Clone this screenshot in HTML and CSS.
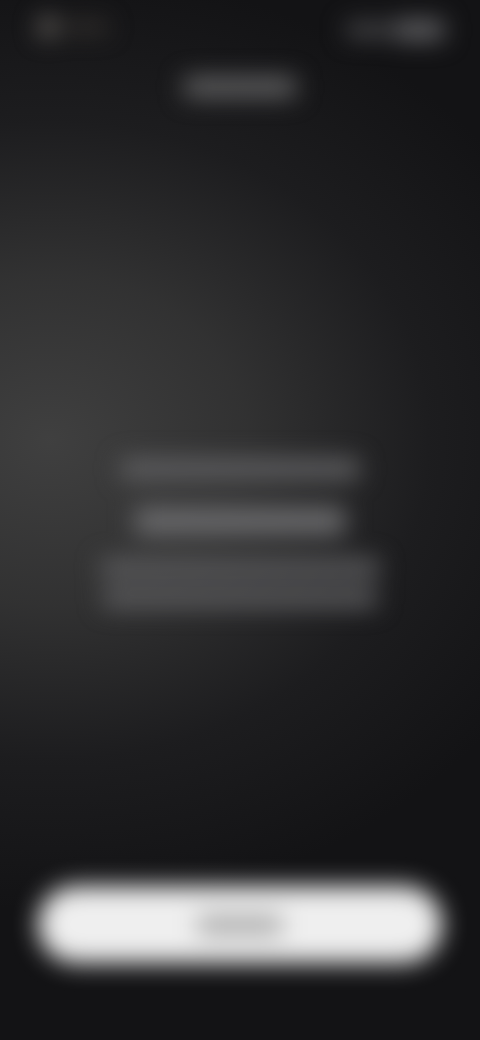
FILE: index.html
```html
<!DOCTYPE html>
<html lang="en">
<head>
<meta charset="utf-8">
<title>Blurred screen</title>
<link rel="stylesheet" href="styles.css">
</head>
<body>
<main class="screen">
  <div class="content">
    <header class="status">
      <div class="status-left">
        <span class="dot"></span>
        <span class="bar status-label"></span>
      </div>
      <div class="status-right">
        <span class="bar status-a"></span>
        <span class="bar status-b"></span>
      </div>
    </header>
    <div class="bar title"></div>
    <section class="message">
      <div class="bar line-1"></div>
      <div class="bar line-2"></div>
      <div class="bar line-3"></div>
      <div class="bar line-4"></div>
    </section>
    <div class="button"><span class="bar button-label"></span></div>
  </div>
</main>
</body>
</html>
```
FILE: styles.css
```css
html, body {
  margin: 0;
  padding: 0;
  width: 480px;
  height: 1040px;
  overflow: hidden;
  background: #131315;
}
.screen {
  width: 480px;
  height: 1040px;
  overflow: hidden;
  background:
    radial-gradient(ellipse 560px 470px at 50px 440px, rgba(66,66,66,0.95) 0%, rgba(58,58,58,0.78) 35%, rgba(42,42,44,0.42) 68%, rgba(20,20,22,0) 100%),
    #131315;
}
.content {
  height: 1040px;
  box-sizing: border-box;
  display: flex;
  flex-direction: column;
  align-items: center;
  padding: 15px 38px 77px;
  filter: blur(12px);
}
.bar {
  display: block;
  border-radius: 3px;
}
.status {
  align-self: stretch;
  display: flex;
  justify-content: space-between;
  align-items: center;
  height: 24px;
}
.status-left {
  display: flex;
  align-items: center;
  gap: 8px;
}
.dot {
  width: 20px;
  height: 20px;
  border-radius: 50%;
  background: #706b66;
}
.status-label {
  width: 42px;
  height: 10px;
  background: #3e3a36;
}
.status-right {
  display: flex;
  align-items: center;
  gap: 4px;
  margin-right: -2px;
  margin-top: 6px;
}
.status-a {
  width: 44px;
  height: 14px;
  background: #4c4c4f;
}
.status-b {
  width: 50px;
  height: 20px;
  background: #626265;
}
.title {
  width: 112px;
  height: 20px;
  margin-top: 38px;
  background: #626263;
}
.message {
  display: flex;
  flex-direction: column;
  align-items: center;
  margin-top: 362px;
}
.line-1 {
  width: 238px;
  height: 20px;
  background: #606062;
}
.line-2 {
  width: 210px;
  height: 28px;
  margin-top: 28px;
  background: #69696b;
}
.line-3 {
  width: 278px;
  height: 18px;
  margin-top: 24px;
  background: #5e5e60;
}
.line-4 {
  width: 274px;
  height: 18px;
  margin-top: 12px;
  background: #5e5e60;
}
.button {
  margin-top: auto;
  align-self: stretch;
  height: 77px;
  border-radius: 38px;
  background: #efefef;
  display: flex;
  align-items: center;
  justify-content: center;
}
.button-label {
  width: 84px;
  height: 20px;
  background: #aaaaaa;
}
```
